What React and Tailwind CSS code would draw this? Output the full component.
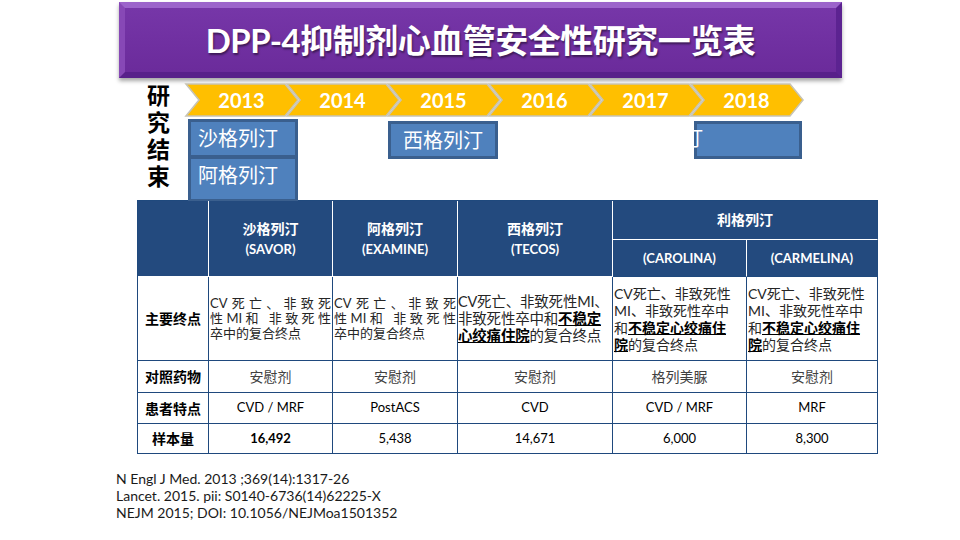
import React from 'react';

const years = ['2013', '2014', '2015', '2016', '2017', '2018'];

const Chevron = ({ year }) => (
  <div className="relative w-[101px] h-[34px] shrink-0">
    <svg className="absolute left-0 top-0 overflow-visible" width="114" height="34" viewBox="0 0 114 34">
      <polygon points="1,1 100,1 113,17 100,33 1,33 14,17" fill="#ffbf00" stroke="#c8c4b4" strokeWidth="1.6" strokeLinejoin="miter" />
    </svg>
    <span className="absolute left-0 top-0 w-[113px] h-[34px] flex items-center justify-center text-white font-bold text-[20px]">
      {year}
    </span>
  </div>
);

const th = "bg-[#234a7e] text-white font-bold text-[13px] leading-[20px] text-center align-middle border-r border-b border-white";
const td = "border-r border-b border-[#1f497d] align-middle text-center";
const label = "border-r border-b border-[#1f497d] align-middle text-center font-bold text-[14px] text-black";

const App = () => {
  return (
    <div
      className="w-[960px] h-[540px] bg-white overflow-hidden text-black"
      style={{ fontFamily: '"Lato", "Noto Sans CJK SC", sans-serif' }}
    >
      {/* title bar */}
      <div className="pt-[2px] pl-[119px]">
        <div className="w-[723px] h-[76px] flex items-center justify-center border-[6px] border-t-[#9c64cb] border-l-[#8748b6] border-r-[#5c2391] border-b-[#58208a] bg-gradient-to-b from-[#7636a8] to-[#6b2b9b] shadow-[0_3px_4px_rgba(0,0,0,0.35)]">
          <h1 className="text-white font-bold text-[33px] leading-none tracking-[-0.5px] [text-shadow:1px_2px_2px_rgba(0,0,0,0.45)]">
            DPP-4抑制剂心血管安全性研究一览表
          </h1>
        </div>
      </div>

      {/* timeline */}
      <div className="flex mt-[4px] pl-[147px] h-[118px]">
        <div className="w-[26px] flex flex-col text-[23px] font-bold leading-[27px] text-black">
          <span>研</span>
          <span>究</span>
          <span>结</span>
          <span>束</span>
        </div>
        <div className="ml-[12px] flex flex-col">
          <div className="flex pt-[1px]">
            {years.map((y) => (
              <Chevron key={y} year={y} />
            ))}
          </div>
          <div className="flex items-start mt-[2px]">
            <div className="ml-[3px] w-[110px] h-[82px] bg-[#3a5f8e] p-[3px] pb-[2px] flex flex-col gap-[4px]">
              <div className="h-[33px] bg-[#4f81bd] text-white text-[20px] leading-[33px] pl-[7px]">沙格列汀</div>
              <div className="flex-1 bg-[#4f81bd] text-white text-[20px] leading-[26px] pl-[7px] pt-[3px]">阿格列汀</div>
            </div>
            <div className="ml-[90px] mt-[2px] w-[110px] h-[38px] bg-[#3a5f8e] p-[3px]">
              <div className="h-full bg-[#4f81bd] text-white text-[20px] leading-[32px] text-center">西格列汀</div>
            </div>
            <div className="relative ml-[196px] mt-[2px] w-[108px] h-[38px] bg-[#3a5f8e] p-[3px] overflow-hidden">
              <div className="h-full bg-[#4f81bd]"></div>
              <span className="absolute left-[-11px] top-[2px] text-white text-[20px] leading-[30px]">汀</span>
            </div>
          </div>
        </div>
      </div>

      {/* table */}
      <div className="ml-[137px]">
        <table className="w-[740px] table-fixed border-separate border-spacing-0 border-l border-t border-[#1f497d]">
          <colgroup>
            <col className="w-[71px]" />
            <col className="w-[124px]" />
            <col className="w-[125px]" />
            <col className="w-[155px]" />
            <col className="w-[134px]" />
            <col className="w-[131px]" />
          </colgroup>
          <thead>
            <tr className="h-[39px]">
              <th rowSpan={2} className={th}></th>
              <th rowSpan={2} className={th}>
                <div className="text-[14px]">沙格列汀</div>
                <div>(SAVOR)</div>
              </th>
              <th rowSpan={2} className={th}>
                <div className="text-[14px]">阿格列汀</div>
                <div>(EXAMINE)</div>
              </th>
              <th rowSpan={2} className={th}>
                <div className="text-[14px]">西格列汀</div>
                <div>(TECOS)</div>
              </th>
              <th colSpan={2} className={th + " text-[14px] border-r-[#1f497d]"}>利格列汀</th>
            </tr>
            <tr className="h-[37px]">
              <th className={th + " border-b-[#1f497d]"}>(CAROLINA)</th>
              <th className={th + " border-r-[#1f497d] border-b-[#1f497d]"}>(CARMELINA)</th>
            </tr>
          </thead>
          <tbody className="text-[#262626]">
            <tr className="h-[84px]">
              <td className={label}>主要终点</td>
              <td className={td + " text-[13px] leading-[15px] px-[1px]"}>
                <div className="text-justify [text-align-last:justify]">CV死亡、非致死</div>
                <div className="text-justify [text-align-last:justify]">性MI和 非致死性</div>
                <div className="text-left">卒中的复合终点</div>
              </td>
              <td className={td + " text-[13px] leading-[15px] px-[1px]"}>
                <div className="text-justify [text-align-last:justify]">CV死亡、非致死</div>
                <div className="text-justify [text-align-last:justify]">性MI和 非致死性</div>
                <div className="text-left">卒中的复合终点</div>
              </td>
              <td className={td + " text-left text-[14.5px] leading-[17px] tracking-[-0.2px] whitespace-nowrap"}>
                <div>CV死亡、非致死性MI、</div>
                <div>非致死性卒中和<b className="underline text-black">不稳定</b></div>
                <div><b className="underline text-black">心绞痛住院</b>的复合终点</div>
              </td>
              <td className={td + " text-left text-[14px] leading-[17px] pl-[1px] whitespace-nowrap"}>
                <div>CV死亡、非致死性</div>
                <div>MI、非致死性卒中</div>
                <div>和<b className="underline text-black">不稳定心绞痛住</b></div>
                <div><b className="underline text-black">院</b>的复合终点</div>
              </td>
              <td className={td + " text-left text-[14px] leading-[17px] pl-[1px] whitespace-nowrap"}>
                <div>CV死亡、非致死性</div>
                <div>MI、非致死性卒中</div>
                <div>和<b className="underline text-black">不稳定心绞痛住</b></div>
                <div><b className="underline text-black">院</b>的复合终点</div>
              </td>
            </tr>
            <tr className="h-[32px] text-[14px] text-[#404040]">
              <td className={label}>对照药物</td>
              <td className={td}>安慰剂</td>
              <td className={td}>安慰剂</td>
              <td className={td}>安慰剂</td>
              <td className={td}>格列美脲</td>
              <td className={td}>安慰剂</td>
            </tr>
            <tr className="h-[31px] text-[13px] text-black">
              <td className={label}>患者特点</td>
              <td className={td}>CVD / MRF</td>
              <td className={td}>PostACS</td>
              <td className={td}>CVD</td>
              <td className={td}>CVD / MRF</td>
              <td className={td}>MRF</td>
            </tr>
            <tr className="h-[30px] text-[13px] text-black">
              <td className={label}>样本量</td>
              <td className={td + " font-bold"}>16,492</td>
              <td className={td}>5,438</td>
              <td className={td}>14,671</td>
              <td className={td}>6,000</td>
              <td className={td}>8,300</td>
            </tr>
          </tbody>
        </table>
      </div>

      {/* references */}
      <div className="ml-[116px] mt-[16px] text-[14px] leading-[17px] text-[#1a1a1a]">
        <p>N Engl J Med. 2013 ;369(14):1317-26</p>
        <p>Lancet. 2015. pii: S0140-6736(14)62225-X</p>
        <p>NEJM 2015; DOI: 10.1056/NEJMoa1501352</p>
      </div>
    </div>
  );
};

export default App;
